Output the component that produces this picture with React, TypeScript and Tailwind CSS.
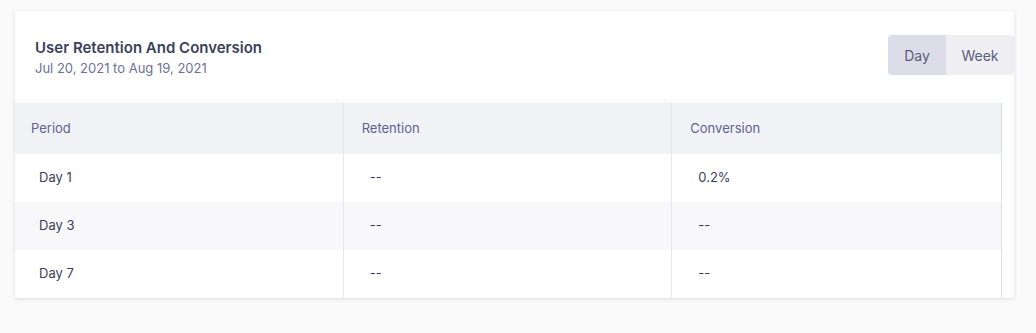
import React from "react";

const rows = [
  { p: "Day 1", r: "--", c: "0.2%" },
  { p: "Day 3", r: "--", c: "--" },
  { p: "Day 7", r: "--", c: "--" },
];

export default function App() {
  return (
    <div
      className="w-[1036px] h-[333px] bg-[#fafafa] pt-[11px] pl-[15px]"
      style={{ fontFamily: "Inter, Lato, sans-serif" }}
    >
      <div className="w-[999px] h-[287px] bg-white shadow-[0_1px_4px_rgba(0,0,0,0.12)] flex flex-col">
        <div className="h-[92px] flex justify-between items-start">
          <div className="pl-[20px] pt-[27px]">
            <div className="text-[15px] font-semibold text-[#3c3f5a] leading-[19px]">
              User Retention And Conversion
            </div>
            <div className="text-[13px] text-[#6e7197] leading-[18px] mt-[2px]">
              Jul 20, 2021 to Aug 19, 2021
            </div>
          </div>
          <div className="mt-[24px] flex h-[40px] rounded-[4px] overflow-hidden text-[14px] text-[#5a5d7c]">
            <div className="w-[58px] bg-[#dcdde8] flex items-center justify-center">Day</div>
            <div className="w-[68px] bg-[#eeeef3] flex items-center justify-center">Week</div>
          </div>
        </div>
        <div className="w-[987px] border-r border-[#dedee3] text-[13px]">
          <div className="grid grid-cols-3 h-[51px] bg-[#f1f2f6] text-[#5e6291] shadow-[0_-3px_6px_rgba(0,0,0,0.03)]">
            <div className="flex items-center pl-[16px] border-r border-[#e6e6ec]">Period</div>
            <div className="flex items-center pl-[18px] border-r border-[#e6e6ec]">Retention</div>
            <div className="flex items-center pl-[18px]">Conversion</div>
          </div>
          {rows.map((row, i) => (
            <div
              key={row.p}
              className={`grid grid-cols-3 h-[48px] text-[#3c3f5a] ${i % 2 === 1 ? "bg-[#f8f8fa]" : "bg-white"}`}
            >
              <div className="flex items-center pl-[24px] border-r border-[#e6e6ec]">{row.p}</div>
              <div className="flex items-center pl-[26px] border-r border-[#e6e6ec]">{row.r}</div>
              <div className="flex items-center pl-[26px]">{row.c}</div>
            </div>
          ))}
        </div>
      </div>
    </div>
  );
}
